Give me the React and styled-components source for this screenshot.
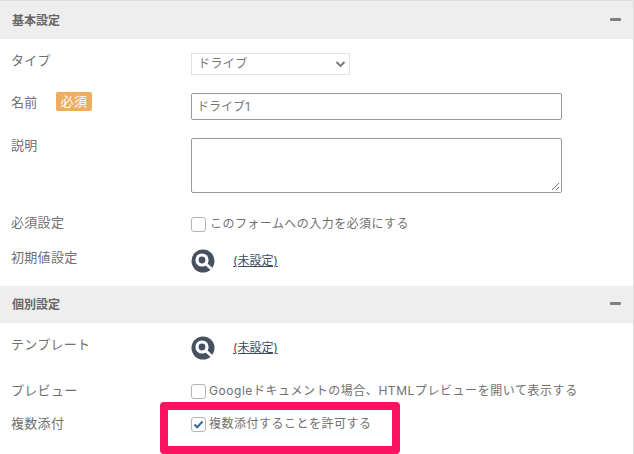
import React from "react";
import styled, { createGlobalStyle } from "styled-components";

const GlobalStyle = createGlobalStyle`
	html, body {
		margin: 0;
		padding: 0;
		background: #fff;
		overflow: hidden;
	}
	body {
		font-family: "Inter", "Noto Sans CJK JP", sans-serif;
		color: #666;
		font-size: 13px;
	}
`;

const Panel = styled.div`
	position: relative;
	width: 634px;
	height: 454px;
	box-sizing: border-box;
	border-top: 1px solid #ddd;
	border-right: 1px solid #ddd;
	overflow: hidden;
`;

const SectionHead = styled.div`
	display: flex;
	align-items: center;
	justify-content: space-between;
	height: ${(p) => p.$height}px;
	padding: 0 12px 2px 12px;
	box-sizing: border-box;
	background: #eee;
	font-size: 12px;
	font-weight: 700;
	color: #666;
`;

const Minus = styled.span`
	width: 11px;
	height: 3px;
	border-radius: 1px;
	background: #7d7f85;
`;

const Row = styled.div`
	display: grid;
	grid-template-columns: 191px 1fr;
	align-items: start;
	height: ${(p) => p.$height}px;
	box-sizing: border-box;
	padding-top: ${(p) => p.$top || 0}px;
`;

const Label = styled.div`
	display: flex;
	align-items: flex-start;
	gap: 18px;
	margin-top: ${(p) => p.$top || 0}px;
	padding-left: 11px;
	line-height: 18px;
	letter-spacing: 0.3px;
	color: #707070;
`;

const Badge = styled.span`
	padding: 0 5px;
	height: 19px;
	line-height: 19px;
	border-radius: 2px;
	background: #efad62;
	color: #fff;
	font-size: 13px;
	margin-top: -1px;
`;

const SelectBox = styled.div`
	display: flex;
	align-items: center;
	justify-content: space-between;
	width: 159px;
	height: 22px;
	box-sizing: border-box;
	padding: 0 0 0 6px;
	border: 1px solid #e2e2e2;
	font-size: 12px;
	line-height: 16px;
	color: #777;
	letter-spacing: 0.4px;
`;

const SelectText = styled.span`
	margin-bottom: 1px;
`;

const Input = styled.div`
	width: 371px;
	height: ${(p) => p.$height}px;
	box-sizing: border-box;
	position: relative;
	padding: 5px;
	border: 1px solid #999;
	border-radius: 2px;
	font-size: 12px;
	line-height: 16px;
	color: #777;
`;

const Grip = styled.svg`
	position: absolute;
	right: 1px;
	bottom: 1px;
	width: 9px;
	height: 9px;
`;

const CheckLine = styled.label`
	display: flex;
	align-items: center;
	gap: ${(p) => p.$gap}px;
	margin-top: ${(p) => p.$top || 0}px;
	line-height: 18px;
	font-size: 12px;
	letter-spacing: ${(p) => p.$spacing || 0}px;
	color: #707070;
`;

const CheckBox = styled.span`
	display: flex;
	align-items: center;
	justify-content: center;
	width: 13px;
	height: 13px;
	border: 1px solid #b4b4b4;
	border-radius: 3px;
	background: #fff;
`;

const LookupLine = styled.div`
	display: flex;
	align-items: center;
	gap: 18px;
	margin-top: ${(p) => p.$top || 0}px;
`;

const LookupLink = styled.a`
	color: #3d4a5c;
	font-size: 12px;
	text-decoration: underline;
	line-height: 18px;
`;

const Highlight = styled.div`
	position: absolute;
	left: 160px;
	top: 401px;
	width: 240px;
	height: 52px;
	box-sizing: border-box;
	border: 8px solid #fb1260;
	border-radius: 4px;
	pointer-events: none;
`;

function SearchIcon() {
	return (
		<svg width="24" height="24" viewBox="0 0 24 24">
			<circle cx="12" cy="12" r="11.5" fill="#47505f" />
			<circle cx="11" cy="11" r="6.6" fill="#fff" />
			<circle cx="11" cy="11" r="3.4" fill="#47505f" />
			<path d="M15 15 L20.5 20" stroke="#fff" strokeWidth="3" />
		</svg>
	);
}

function App() {
	return (
		<>
			<GlobalStyle />
			<Panel>
				<SectionHead $height={38}>
					基本設定
					<Minus />
				</SectionHead>
				<Row $height={54} $top={14}>
					<Label $top={-2}>タイプ</Label>
					<SelectBox>
						<SelectText>ドライブ</SelectText>
						<svg width="20" height="20" viewBox="0 0 20 20">
							<path d="M7.5 8 L11.5 12 L15.5 8" fill="none" stroke="#777" strokeWidth="1.8" />
						</svg>
					</SelectBox>
				</Row>
				<Row $height={45}>
					<Label>
						名前
						<Badge>必須</Badge>
					</Label>
					<Input $height={27}>ドライブ1</Input>
				</Row>
				<Row $height={75}>
					<Label $top={-2}>説明</Label>
					<Input $height={55}>
						<Grip viewBox="0 0 9 9">
							<path d="M1 8 L8 1 M5 8 L8 5" stroke="#777" strokeWidth="1" />
						</Grip>
					</Input>
				</Row>
				<Row $height={35}>
					<Label>必須設定</Label>
					<CheckLine $gap={4} $spacing={0.45} $top={2}>
						<CheckBox />
						このフォームへの入力を必須にする
					</CheckLine>
				</Row>
				<Row $height={38}>
					<Label>初期値設定</Label>
					<LookupLine $top={1}>
						<SearchIcon />
						<LookupLink>(未設定)</LookupLink>
					</LookupLine>
				</Row>
				<SectionHead $height={37}>
					個別設定
					<Minus />
				</SectionHead>
				<Row $height={54} $top={13}>
					<Label $top={-1}>テンプレート</Label>
					<LookupLine>
						<SearchIcon />
						<LookupLink>(未設定)</LookupLink>
					</LookupLine>
				</Row>
				<Row $height={34} $top={4}>
					<Label>プレビュー</Label>
					<CheckLine $gap={3} $spacing={0.55} $top={1}>
						<CheckBox />
						Googleドキュメントの場合、HTMLプレビューを開いて表示する
					</CheckLine>
				</Row>
				<Row $height={32} $top={3}>
					<Label>複数添付</Label>
					<CheckLine $gap={3} $spacing={0.5} $top={1}>
						<CheckBox>
							<svg width="11" height="11" viewBox="0 0 11 11">
								<path d="M1.5 5.5 L4.2 8.2 L9.5 2.5" fill="none" stroke="#2a6ba8" strokeWidth="2" />
							</svg>
						</CheckBox>
						複数添付することを許可する
					</CheckLine>
				</Row>
				<Highlight />
			</Panel>
		</>
	);
}

export default App;
